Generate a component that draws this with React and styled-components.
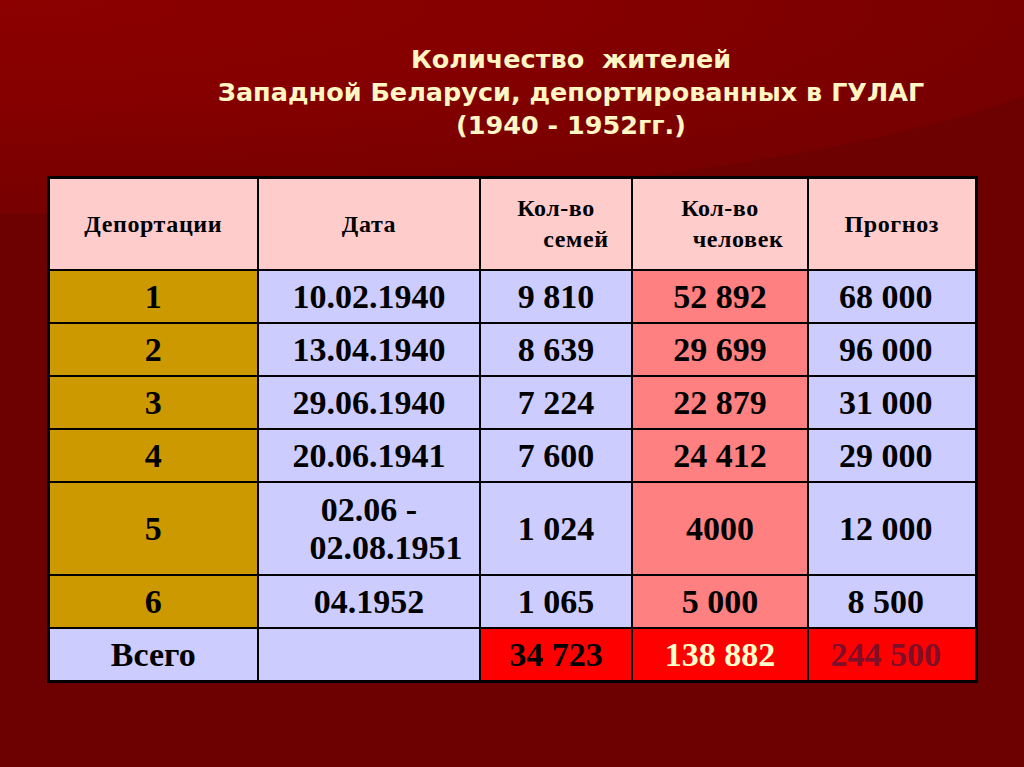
import React from 'react';
import styled, { createGlobalStyle } from 'styled-components';

const Global = createGlobalStyle`
  html, body { margin:0; padding:0; }
  body { background:#6e0000; }
`;

const Slide = styled.div`
  width:1024px; height:767px; overflow:hidden; box-sizing:border-box;
  background:
    radial-gradient(ellipse 1150px 214px at 0 0, #8c0000 0%, #860000 45%, #770000 99.4%, transparent 100%),
    #6d0000;
  display:flex; flex-direction:column; align-items:center;
  padding-top:43px;
`;

const Title = styled.h1`
  margin:0 0 0 118px; padding:0;
  font-family:"DejaVu Sans", Verdana, sans-serif;
  font-weight:bold; font-size:25.5px; line-height:33px;
  color:#fff6c4; text-align:center; white-space:pre;
`;

const Table = styled.table`
  margin-top:34px;
  width:928px; table-layout:fixed; border-collapse:collapse;
  border:3px solid #000;
  font-family:"Liberation Serif", "Times New Roman", serif; font-weight:bold; color:#000;
`;

const Th = styled.th`
  height:90px; padding:0; border:2px solid #000;
  background:#ffcccc; font-size:24px; line-height:31px; font-weight:bold; letter-spacing:0.6px;
  text-align:center; vertical-align:middle;
`;

const Shift = styled.span`
  display:inline-block; padding-left:${p => p.$by || 36}px;
`;

const bg = {
  num: '#cc9900',
  plain: '#ccccff',
  people: '#ff8080',
  total: '#ff0000',
};

const Td = styled.td`
  height:${p => p.$tall ? 91 : 51}px; padding:0 ${p => p.$pr || 0}px 0 0;
  border:2px solid #000;
  background:${p => bg[p.$kind || 'plain']};
  color:${p => p.$color || '#000'};
  font-size:34px; line-height:38px; text-align:center; vertical-align:middle;
`;

const rows = [
  ['1', '10.02.1940', '9 810', '52 892', '68 000'],
  ['2', '13.04.1940', '8 639', '29 699', '96 000'],
  ['3', '29.06.1940', '7 224', '22 879', '31 000'],
  ['4', '20.06.1941', '7 600', '24 412', '29 000'],
  ['5', null, '1 024', '4000', '12 000'],
  ['6', '04.1952', '1 065', '5 000', '8 500'],
];

export default function App() {
  return (
    <Slide>
      <Global />
      <Title>{'Количество  жителей\nЗападной Беларуси, депортированных в ГУЛАГ\n(1940 - 1952гг.)'}</Title>
      <Table>
        <colgroup>
          <col style={{ width: 210 }} />
          <col style={{ width: 222 }} />
          <col style={{ width: 152 }} />
          <col style={{ width: 176 }} />
          <col style={{ width: 168 }} />
        </colgroup>
        <thead>
          <tr>
            <Th>Депортации</Th>
            <Th>Дата</Th>
            <Th>Кол-во<br /><Shift $by={40}>семей</Shift></Th>
            <Th>Кол-во<br /><Shift $by={36}>человек</Shift></Th>
            <Th>Прогноз</Th>
          </tr>
        </thead>
        <tbody>
          {rows.map(r => {
            const tall = r[1] === null;
            return (
              <tr key={r[0]}>
                <Td $kind="num" $tall={tall}>{r[0]}</Td>
                <Td $tall={tall}>
                  {tall ? <>02.06 -<br /><Shift $by={34}>02.08.1951</Shift></> : r[1]}
                </Td>
                <Td $tall={tall}>{r[2]}</Td>
                <Td $kind="people" $tall={tall}>{r[3]}</Td>
                <Td $tall={tall} $pr={12}>{r[4]}</Td>
              </tr>
            );
          })}
          <tr>
            <Td>Всего</Td>
            <Td />
            <Td $kind="total">34 723</Td>
            <Td $kind="total" $color="#ffffcc">138 882</Td>
            <Td $kind="total" $color="#7d1028" $pr={12}>244 500</Td>
          </tr>
        </tbody>
      </Table>
    </Slide>
  );
}
